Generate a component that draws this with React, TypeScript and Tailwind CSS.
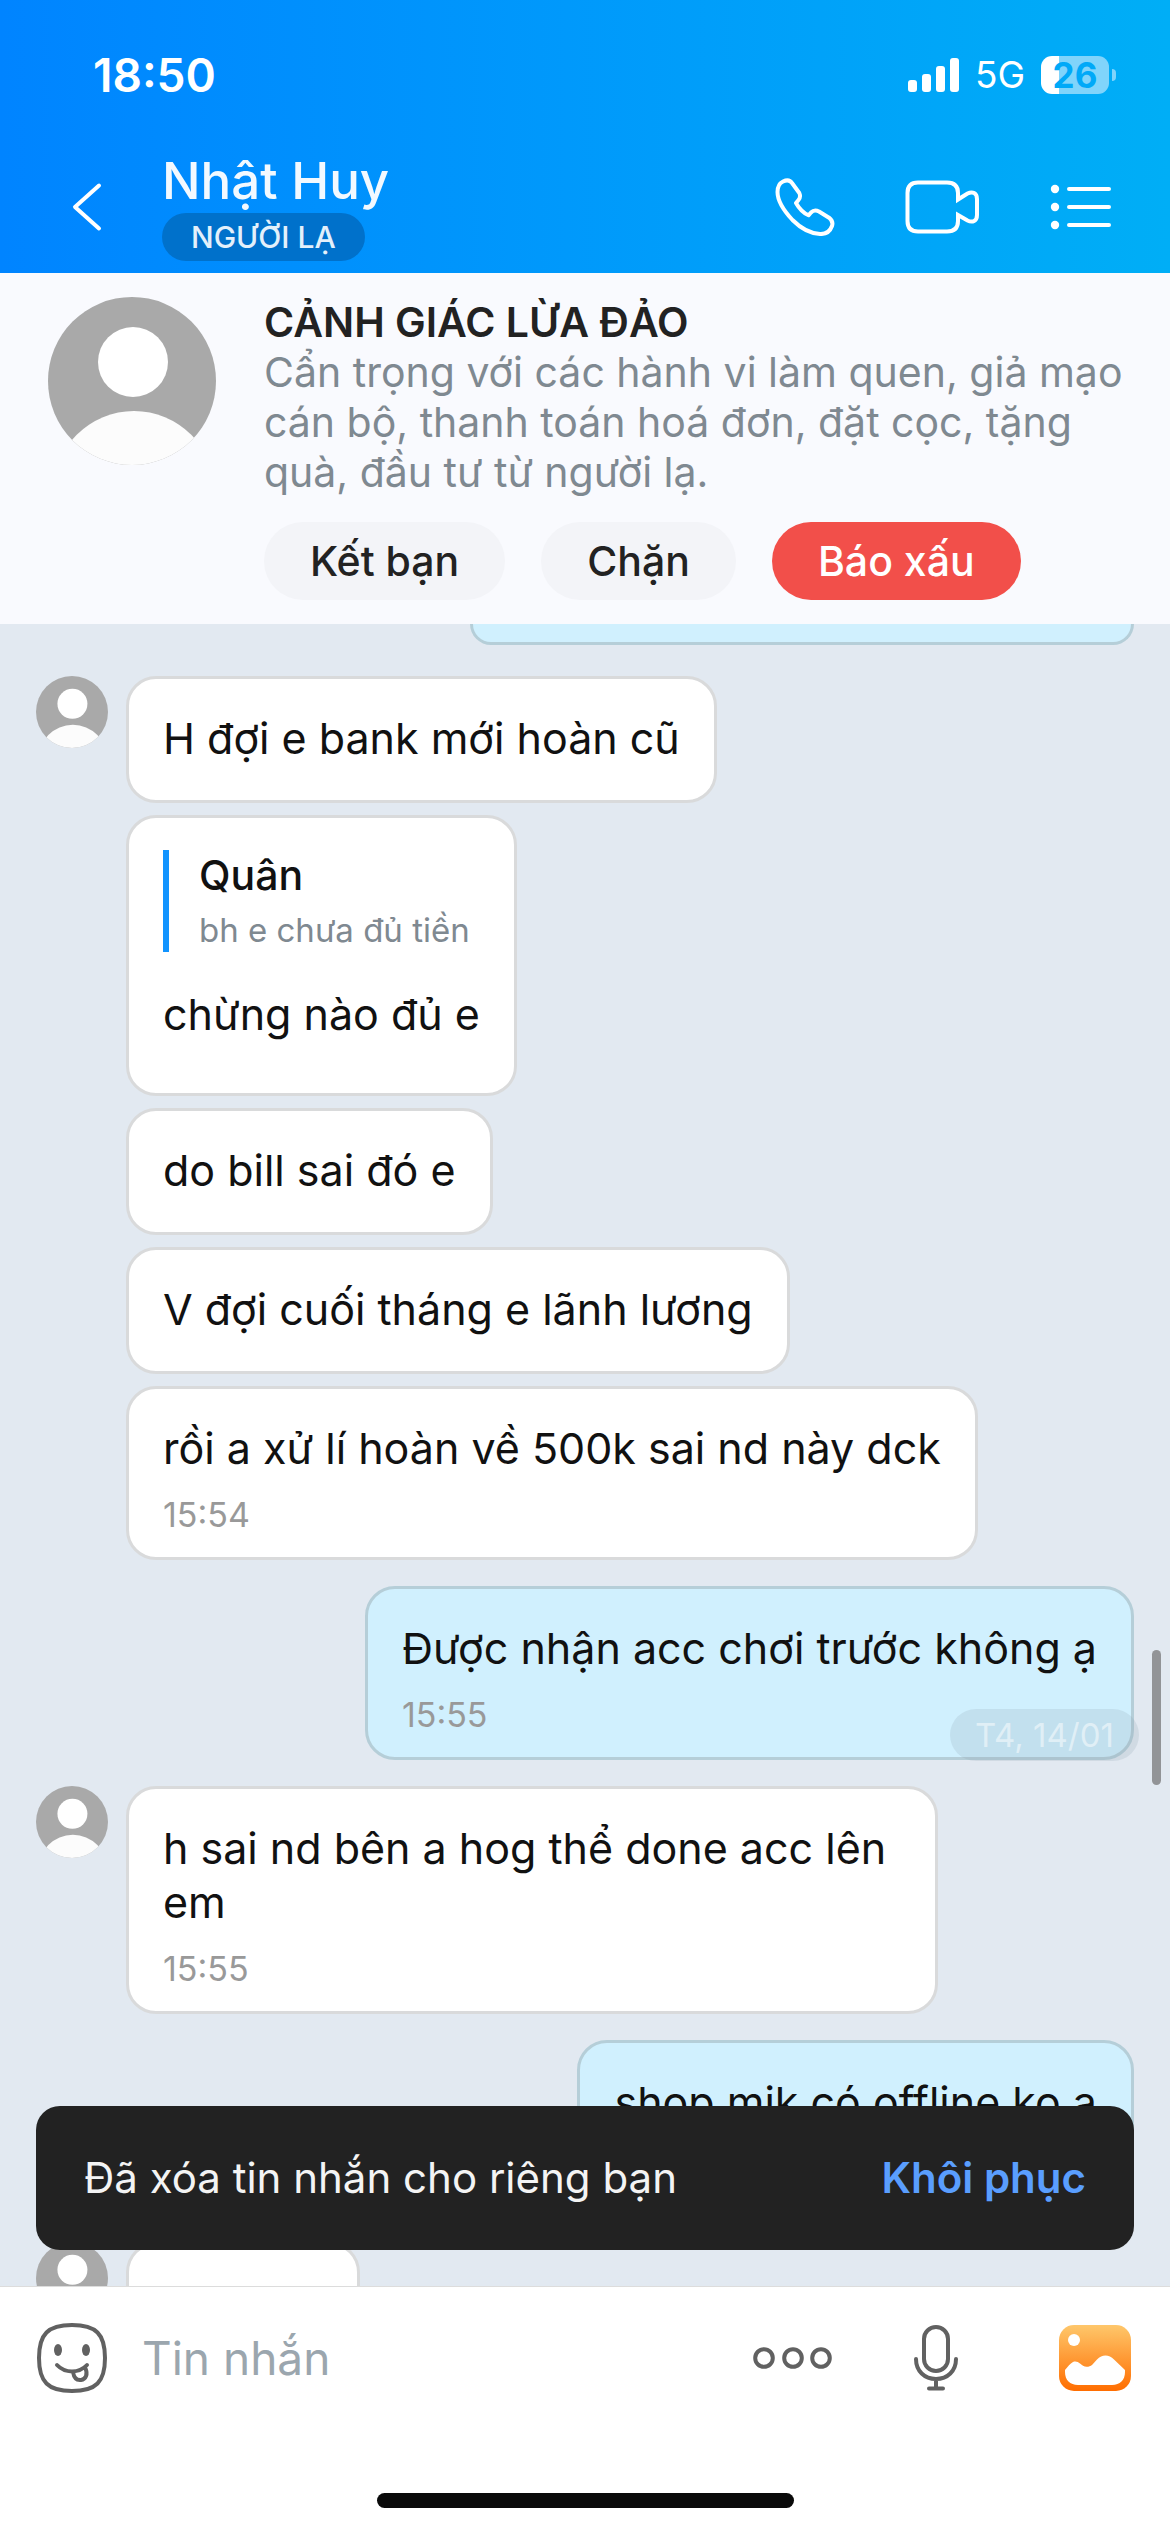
import type { ReactNode } from "react";

type Message = {
  id: number;
  text: string;
  time?: string;
  quote?: { name: string; text: string };
  className?: string;
};

type Group = {
  id: number;
  from: "me" | "them";
  messages: Message[];
};

const groups: Group[] = [
  {
    id: 1,
    from: "them",
    messages: [
      { id: 1, text: "H đợi e bank mới hoàn cũ" },
      { id: 2, text: "chừng nào đủ e", quote: { name: "Quân", text: "bh e chưa đủ tiền" } },
      { id: 3, text: "do bill sai đó e" },
      { id: 4, text: "V đợi cuối tháng e lãnh lương" },
      { id: 5, text: "rồi a xử lí hoàn về 500k sai nd này dck", time: "15:54" },
    ],
  },
  {
    id: 2,
    from: "me",
    messages: [{ id: 6, text: "Được nhận acc chơi trước không ạ", time: "15:55" }],
  },
  {
    id: 3,
    from: "them",
    messages: [{ id: 7, text: "h sai nd bên a hog thể done acc lên em", time: "15:55", className: "max-w-[812px]" }],
  },
  {
    id: 4,
    from: "me",
    messages: [{ id: 8, text: "shop mik có offline ko ạ" }],
  },
];

function Avatar({ className }: { className: string }) {
  return (
    <span className={`block shrink-0 overflow-hidden rounded-full bg-[#a9a9a9] ${className}`}>
      <svg viewBox="0 0 168 168" className="block size-full" aria-hidden>
        <circle cx="85" cy="65" r="35" fill="#fff" />
        <circle cx="86" cy="195" r="81" fill="#fcfcfc" />
      </svg>
    </span>
  );
}

function StatusBar() {
  return (
    <div className="flex items-center justify-between pt-12 pr-[54px] pl-[93px]">
      <span className="text-[46px] leading-[54px] font-semibold">18:50</span>
      <div className="flex items-center gap-4">
        <svg width="51" height="34" viewBox="0 0 51 34" fill="#fff" aria-hidden>
          <rect x="0" y="22" width="9" height="12" rx="3" />
          <rect x="14" y="16" width="9" height="18" rx="3" />
          <rect x="28" y="8" width="9" height="26" rx="3" />
          <rect x="42" y="0" width="9" height="34" rx="3" />
        </svg>
        <span className="text-[37px] leading-[54px]">5G</span>
        <div className="flex items-center gap-[3px]">
          <span className="flex h-[38px] w-[68px] items-center justify-center rounded-[11px] bg-[linear-gradient(to_right,#fff_18px,#80d4fb_18px)] text-[35px] leading-[38px] font-bold text-[#00a9f8]">
            26
          </span>
          <span className="h-3 w-1 rounded-r-full bg-[#80d4fb]" />
        </div>
      </div>
    </div>
  );
}

function Header() {
  return (
    <header className="bg-linear-to-r from-[#0084ff] to-[#00aef6] text-white">
      <StatusBar />
      <div className="flex items-center pt-[50px] pr-[58px] pb-3 pl-[70px]">
        <button type="button" aria-label="Quay lại" className="mr-[60px]">
          <svg width="32" height="50" viewBox="0 0 32 50" fill="none" stroke="#fff" strokeWidth="4" strokeLinecap="round" strokeLinejoin="round">
            <path d="M29 3.500 5 25l24 21.500" />
          </svg>
        </button>
        <div className="flex flex-1 flex-col items-start">
          <h1 className="mb-1 text-[51px] leading-[57px] font-medium text-[#f2f9ff]">Nhật Huy</h1>
          <span className="rounded-full bg-[#0071cb] px-[29px] text-[30px] leading-[48px] font-medium text-[#e3f0fb]">
            NGƯỜI LẠ
          </span>
        </div>
        <div className="flex items-center gap-[70px]">
          <button type="button" aria-label="Gọi điện">
            <svg width="60" height="58" viewBox="0 0 60 58" fill="none" stroke="#fff" strokeWidth="4" strokeLinejoin="round">
              <path d="M8 3.500C4 5.500 2.500 9 2.500 14c0 9 8 20.500 15 28 8 8 18 13.500 27.500 14 6 .3 10-2.500 12-8 1.300-3.700 0-6-3-8.300L44 33.500c-3-1.500-6-1-8 1l-2.500 2.800c-5.500-2.500-9.500-7-12.500-12.300l2.500-3c2-2.500 2-4.500.8-7L17 5C15 2 11.500 1.800 8 3.500Z" />
            </svg>
          </button>
          <button type="button" aria-label="Gọi video">
            <svg width="75" height="54" viewBox="0 0 75 54" fill="none" stroke="#fff" strokeWidth="4">
              <path d="M53 19.500V13C53 6 49.500 2.500 42 2.500H13C6 2.500 2.500 6 2.500 13v28c0 7 3.500 10.500 10.500 10.500h29c7.500 0 11-3.500 11-10.500v-6l9.500 5.500c5 2.500 9.500.5 9.500-5.500V19c0-6-4.500-8-9.500-5.500Z" />
            </svg>
          </button>
          <button type="button" aria-label="Tùy chọn">
            <svg width="62" height="46" viewBox="0 0 62 46" fill="#fff" stroke="#fff" strokeWidth="4" strokeLinecap="round">
              <g stroke="none">
                <circle cx="5" cy="5" r="4.200" />
                <circle cx="5" cy="23" r="4.200" />
                <circle cx="5" cy="41" r="4.200" />
              </g>
              <path d="M19 5h40M19 23h40M19 41h40" />
            </svg>
          </button>
        </div>
      </div>
    </header>
  );
}

function ScamWarning() {
  return (
    <section className="flex gap-12 bg-[#f9fafe] py-6 pr-8 pl-12">
      <Avatar className="size-[168px]" />
      <div className="flex-1 text-[41px] leading-[50px]">
        <h2 className="font-semibold text-[#222]">CẢNH GIÁC LỪA ĐẢO</h2>
        <p className="text-[#7f8991]">
          Cẩn trọng với các hành vi làm quen, giả mạo cán bộ, thanh toán hoá đơn, đặt cọc, tặng quà, đầu tư từ người lạ.
        </p>
        <div className="mt-[25px] flex gap-9 leading-[78px] font-medium">
          <button type="button" className="rounded-full bg-[#f3f4f8] px-[46px] text-[#222]">
            Kết bạn
          </button>
          <button type="button" className="rounded-full bg-[#f3f4f8] px-[46px] text-[#222]">
            Chặn
          </button>
          <button type="button" className="rounded-full bg-[#f24f4a] px-[46px] text-white">
            Báo xấu
          </button>
        </div>
      </div>
    </section>
  );
}

function Bubble({ message, mine, children }: { message: Message; mine: boolean; children?: ReactNode }) {
  const { text, time, quote, className = "" } = message;

  return (
    <div
      className={`relative rounded-[30px] border-3 px-[34px] pt-8 ${mine ? "border-[#b5ced8] bg-[#d0f0fe]" : "border-[#d9dadb] bg-white"} ${
        time ? "pb-[22px]" : quote ? "pb-[52px]" : "pb-[35px]"
      } ${className}`}
    >
      {quote && (
        <blockquote className="mb-[35px] border-l-6 border-[#1194ff] pr-2 pl-[30px]">
          <p className="text-[41px] leading-[50px] font-medium text-[#111]">{quote.name}</p>
          <p className="pt-2 text-[33px] leading-[44px] text-[#7f8991]">{quote.text}</p>
        </blockquote>
      )}
      <p className="text-[43px] leading-[54px] text-[#111]">{text}</p>
      {time && <time className="mt-5 block text-[34px] leading-[40px] text-[#999]">{time}</time>}
      {children}
    </div>
  );
}

function MessageGroup({ group }: { group: Group }) {
  const mine = group.from === "me";

  return (
    <div className={`flex gap-[18px] ${mine ? "justify-end" : ""}`}>
      {!mine && <Avatar className="size-[72px]" />}
      <div className={`flex flex-col gap-3 ${mine ? "items-end" : "items-start"}`}>
        {group.messages.map((message) => (
          <Bubble key={message.id} message={message} mine={mine}>
            {message.id === 6 && (
              <span className="absolute -right-2 -bottom-1 rounded-full bg-[#8aa0b0]/20 px-[25px] text-[33px] leading-[52px] text-white/50">
                T4, 14/01
              </span>
            )}
          </Bubble>
        ))}
      </div>
    </div>
  );
}

function Toast() {
  return (
    <div
      role="status"
      className="absolute inset-x-9 bottom-9 flex items-center justify-between rounded-3xl bg-[#222] px-12 py-[45px] text-[42px] leading-[54px] text-[#f4f4f4]"
    >
      <span>Đã xóa tin nhắn cho riêng bạn</span>
      <button type="button" className="font-semibold text-[#5a9efe]">
        Khôi phục
      </button>
    </div>
  );
}

function Composer() {
  return (
    <footer className="border-t border-[#dcdcdc] bg-white">
      <div className="flex items-center pt-[34px] pr-[39px] pl-9">
        <button type="button" aria-label="Biểu cảm">
          <svg width="72" height="72" viewBox="0 0 72 72" fill="none" stroke="#616161" strokeWidth="4" strokeLinecap="round">
            <path d="M36 3C12 3 3 12 3 36s9 33 33 33 33-9 33-33S60 3 36 3Z" />
            <ellipse cx="22" cy="28" rx="4" ry="6" fill="#616161" stroke="none" />
            <ellipse cx="50" cy="28" rx="4" ry="6" fill="#616161" stroke="none" />
            <path d="M21 43c8 8.500 22 8.500 30 0M37 50c1 6 4 8.500 8 8 5-.6 7-6 4.500-11.500" />
          </svg>
        </button>
        <input
          type="text"
          aria-label="Tin nhắn"
          placeholder="Tin nhắn"
          className="ml-[34px] h-[74px] min-w-0 flex-1 text-[46px] text-[#111] outline-none placeholder:text-[#9ba6ae]"
        />
        <button type="button" aria-label="Thêm" className="mr-20">
          <svg width="80" height="24" viewBox="0 0 80 24" fill="none" stroke="#616161" strokeWidth="4">
            <circle cx="11" cy="12" r="8.800" />
            <circle cx="40" cy="12" r="8.800" />
            <circle cx="68" cy="12" r="8.800" />
          </svg>
        </button>
        <button type="button" aria-label="Ghi âm" className="mr-[100px]">
          <svg width="46" height="66" viewBox="0 0 46 66" fill="none" stroke="#616161" strokeWidth="4" strokeLinecap="round">
            <rect x="11" y="2" width="24" height="44" rx="12" />
            <path d="M3 34c0 12 8.500 20 20 20s20-8 20-20M23 54v9M16 63.500h14" />
          </svg>
        </button>
        <button type="button" aria-label="Hình ảnh">
          <svg width="72" height="66" viewBox="0 0 72 66" aria-hidden>
            <defs>
              <linearGradient id="photo" x1="0" y1="0" x2="0" y2="1">
                <stop offset="0" stopColor="#fec76b" />
                <stop offset="1" stopColor="#ff6d00" />
              </linearGradient>
            </defs>
            <rect width="72" height="66" rx="15" fill="url(#photo)" />
            <circle cx="15" cy="15" r="6" fill="#fff" />
            <path
              d="M6 45c3-3.500 5-6.500 8-8 2.500-1 5-.3 7 1.500l3 2.300c2.500 1.500 6.500 1.300 9-.8l5-5.500c5-5.500 12-5.500 17 0L66 45v2c0 8-5 13-13 13H19C11 60 6 55 6 47v-2Z"
              fill="#fff"
            />
          </svg>
        </button>
      </div>
      <div className="mx-auto mt-[98px] mb-6 h-[15px] w-[417px] max-w-full rounded-full bg-[#0a0a0a]" />
    </footer>
  );
}

export default function App() {
  return (
    <div className="flex min-h-screen flex-col bg-[#e2e9f1] font-[Inter,'Liberation_Sans',sans-serif]">
      <Header />
      <ScamWarning />
      <main className="relative flex flex-1 flex-col overflow-hidden px-9">
        <div className="h-[21px] w-[664px] self-end rounded-b-[30px] border-3 border-t-0 border-[#b5ced8] bg-[#d0f0fe]" />
        <div className="mt-[31px] flex flex-1 flex-col gap-[26px]">
          {groups.map((group) => (
            <MessageGroup key={group.id} group={group} />
          ))}
          <div className="mt-auto flex h-[44px] gap-[18px]">
            <Avatar className="size-[72px]" />
            <div className="w-[234px] rounded-t-[30px] border-3 border-b-0 border-[#d9dadb] bg-white" />
          </div>
        </div>
        <Toast />
        <span className="absolute top-[1026px] right-[9px] h-[135px] w-[9px] rounded-full bg-[#929497]" />
      </main>
      <Composer />
    </div>
  );
}
